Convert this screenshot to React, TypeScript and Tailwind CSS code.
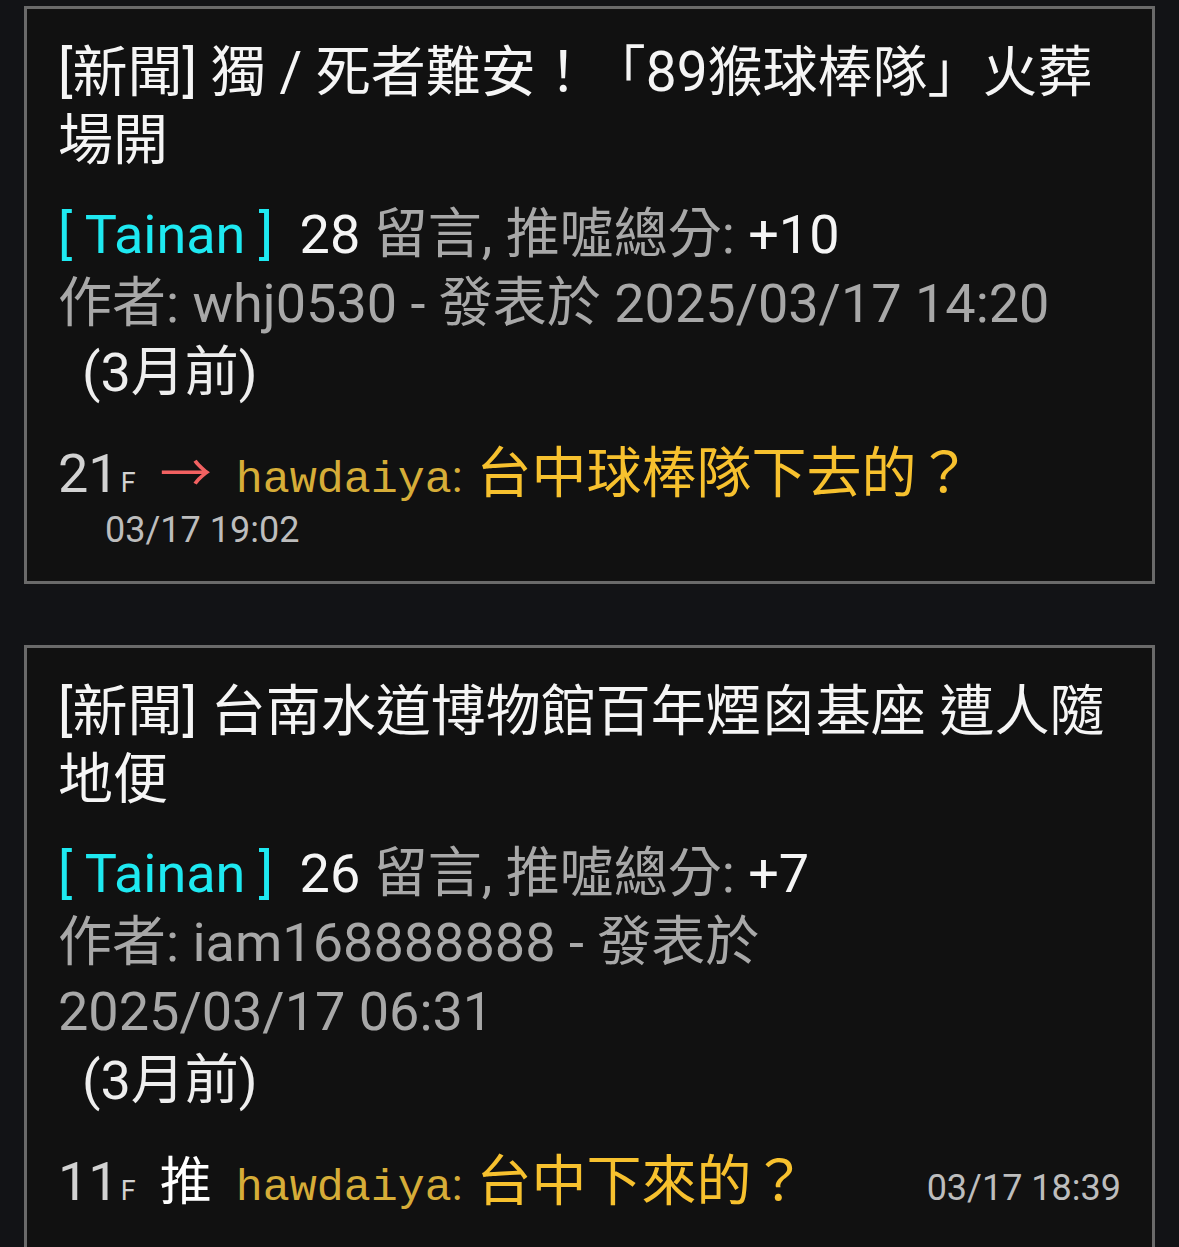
const articles = [
  {
    title: "[新聞] 獨 / 死者難安！「89猴球棒隊」火葬場開",
    board: "Tainan",
    comments: 28,
    score: "+10",
    author: "whj0530",
    date: "2025/03/17 14:20",
    ago: "3月前",
    floor: "21",
    tag: "→",
    user: "hawdaiya",
    text: "台中球棒隊下去的？",
    time: "03/17 19:02",
    timeBelow: true,
  },
  {
    title: "[新聞] 台南水道博物館百年煙囪基座 遭人隨地便",
    board: "Tainan",
    comments: 26,
    score: "+7",
    author: "iam168888888",
    date: "2025/03/17 06:31",
    ago: "3月前",
    floor: "11",
    tag: "推",
    user: "hawdaiya",
    text: "台中下來的？",
    time: "03/17 18:39",
    timeBelow: false,
  },
];

export default function App() {
  return (
    <div className="min-h-screen bg-[#121316] pt-[6px] font-[Roboto,'Noto_Sans_CJK_TC',sans-serif]">
      <div className="flex flex-col gap-[61px]">
        {articles.map((a) => (
          <article
            key={a.title}
            className="mx-6 border-[3px] border-[#6a6a6a] bg-[#111111] px-[31px] pt-[29px] pb-[29px]"
          >
            {/* 標題 */}
            <h2 className="text-[55px] leading-[68px] font-normal text-[#f5f5f5]">
              {a.title}
            </h2>

            {/* 資訊 */}
            <div className="mt-[26px] text-[54px] leading-[69px] text-[#a8a8a8]">
              <p>
                <span className="mr-[13px] text-[#1ee9f1]">[ {a.board} ]</span>{" "}
                <span className="text-[#f5f5f5]">{a.comments}</span> 留言, 推噓總分:{" "}
                <span className="text-[#f5f5f5]">{a.score}</span>
              </p>
              <p>
                作者: {a.author} - 發表於{" "}
                <span className="whitespace-nowrap">{a.date}</span>
              </p>
              <p className="pl-6 text-[#eeeeee]">({a.ago})</p>
            </div>

            {/* 留言 */}
            <div className="mt-[29px] flex flex-wrap items-baseline leading-[68px]">
              <span className="text-[54px] text-[#d2d2d2]">{a.floor}</span>
              <span className="ml-[2px] text-[27px] text-[#d2d2d2]">F</span>
              {a.tag === "→" ? (
                <span className="ml-[24px] font-['Noto_Sans_CJK_TC',sans-serif] text-[52px] text-[#f26161]">
                  →
                </span>
              ) : (
                <span className="ml-[24px] font-['Noto_Sans_CJK_TC',sans-serif] text-[52px] text-white">
                  推
                </span>
              )}
              <span className="ml-[24px] font-['Courier_New','Nimbus_Mono_PS','FreeMono','Liberation_Mono',monospace] text-[45px] text-[#d6ad38]">
                {a.user}
              </span>
              <span className="text-[45px] text-[#d6ad38]">:</span>
              <span className="ml-[14px] text-[55px] text-[#f7c12e]">{a.text}</span>
              {!a.timeBelow && (
                <span className="ml-auto text-[36px] text-[#bdbdbd]">{a.time}</span>
              )}
            </div>
            {a.timeBelow && (
              <p className="mt-[-9px] pl-[47px] text-[36px] leading-[44px] text-[#bdbdbd]">
                {a.time}
              </p>
            )}
          </article>
        ))}
      </div>
    </div>
  );
}
